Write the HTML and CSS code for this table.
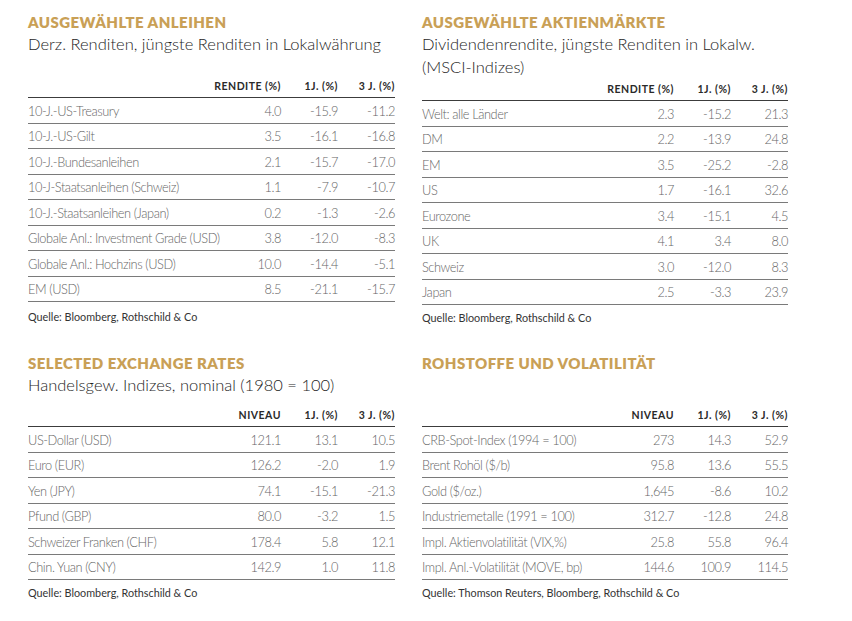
FILE: index.html
```html
<!DOCTYPE html>
<html lang="de">
<head>
<meta charset="utf-8">
<title>Märkte</title>
<link rel="stylesheet" href="styles.css">
</head>
<body>
<main class="page">
  <section class="panel panel--bonds">
    <h2 class="title">Ausgewählte Anleihen</h2>
    <p class="sub">Derz. Renditen, jüngste Renditen in Lokalwährung</p>
    <table class="data">
      <thead><tr><th class="lbl"></th><th class="c1">Rendite (%)</th><th class="c2">1J. (%)</th><th class="c3">3 J. (%)</th></tr></thead>
      <tbody>
        <tr><td>10-J.-US-Treasury</td><td>4.0</td><td>-15.9</td><td>-11.2</td></tr>
        <tr><td>10-J.-US-Gilt</td><td>3.5</td><td>-16.1</td><td>-16.8</td></tr>
        <tr><td>10-J.-Bundesanleihen</td><td>2.1</td><td>-15.7</td><td>-17.0</td></tr>
        <tr><td>10-J-Staatsanleihen (Schweiz)</td><td>1.1</td><td>-7.9</td><td>-10.7</td></tr>
        <tr><td>10-J.-Staatsanleihen (Japan)</td><td>0.2</td><td>-1.3</td><td>-2.6</td></tr>
        <tr><td>Globale Anl.: Investment Grade (USD)</td><td>3.8</td><td>-12.0</td><td>-8.3</td></tr>
        <tr><td>Globale Anl.: Hochzins (USD)</td><td>10.0</td><td>-14.4</td><td>-5.1</td></tr>
        <tr><td>EM (USD)</td><td>8.5</td><td>-21.1</td><td>-15.7</td></tr>
      </tbody>
    </table>
    <p class="source">Quelle: Bloomberg, Rothschild &amp; Co</p>
  </section>

  <section class="panel panel--equity">
    <h2 class="title">Ausgewählte Aktienmärkte</h2>
    <p class="sub">Dividendenrendite, jüngste Renditen in Lokalw.<br>(MSCI-Indizes)</p>
    <table class="data">
      <thead><tr><th class="lbl"></th><th class="c1">Rendite (%)</th><th class="c2">1J. (%)</th><th class="c3">3 J. (%)</th></tr></thead>
      <tbody>
        <tr><td>Welt: alle Länder</td><td>2.3</td><td>-15.2</td><td>21.3</td></tr>
        <tr><td>DM</td><td>2.2</td><td>-13.9</td><td>24.8</td></tr>
        <tr><td>EM</td><td>3.5</td><td>-25.2</td><td>-2.8</td></tr>
        <tr><td>US</td><td>1.7</td><td>-16.1</td><td>32.6</td></tr>
        <tr><td>Eurozone</td><td>3.4</td><td>-15.1</td><td>4.5</td></tr>
        <tr><td>UK</td><td>4.1</td><td>3.4</td><td>8.0</td></tr>
        <tr><td>Schweiz</td><td>3.0</td><td>-12.0</td><td>8.3</td></tr>
        <tr><td>Japan</td><td>2.5</td><td>-3.3</td><td>23.9</td></tr>
      </tbody>
    </table>
    <p class="source">Quelle: Bloomberg, Rothschild &amp; Co</p>
  </section>

  <section class="panel panel--fx">
    <h2 class="title">Selected Exchange Rates</h2>
    <p class="sub">Handelsgew. Indizes, nominal (1980 = 100)</p>
    <table class="data">
      <thead><tr><th class="lbl"></th><th class="c1">Niveau</th><th class="c2">1J. (%)</th><th class="c3">3 J. (%)</th></tr></thead>
      <tbody>
        <tr><td>US-Dollar (USD)</td><td>121.1</td><td>13.1</td><td>10.5</td></tr>
        <tr><td>Euro (EUR)</td><td>126.2</td><td>-2.0</td><td>1.9</td></tr>
        <tr><td>Yen (JPY)</td><td>74.1</td><td>-15.1</td><td>-21.3</td></tr>
        <tr><td>Pfund (GBP)</td><td>80.0</td><td>-3.2</td><td>1.5</td></tr>
        <tr><td>Schweizer Franken (CHF)</td><td>178.4</td><td>5.8</td><td>12.1</td></tr>
        <tr><td>Chin. Yuan (CNY)</td><td>142.9</td><td>1.0</td><td>11.8</td></tr>
      </tbody>
    </table>
    <p class="source">Quelle: Bloomberg, Rothschild &amp; Co</p>
  </section>

  <section class="panel panel--commod">
    <h2 class="title">Rohstoffe und Volatilität</h2>
    <p class="sub sub--empty">&nbsp;</p>
    <table class="data">
      <thead><tr><th class="lbl"></th><th class="c1">Niveau</th><th class="c2">1J. (%)</th><th class="c3">3 J. (%)</th></tr></thead>
      <tbody>
        <tr><td>CRB-Spot-Index (1994 = 100)</td><td>273</td><td>14.3</td><td>52.9</td></tr>
        <tr><td>Brent Rohöl ($/b)</td><td>95.8</td><td>13.6</td><td>55.5</td></tr>
        <tr><td>Gold ($/oz.)</td><td>1,645</td><td>-8.6</td><td>10.2</td></tr>
        <tr><td>Industriemetalle (1991 = 100)</td><td>312.7</td><td>-12.8</td><td>24.8</td></tr>
        <tr><td>Impl. Aktienvolatilität (VIX,%)</td><td>25.8</td><td>55.8</td><td>96.4</td></tr>
        <tr><td>Impl. Anl.-Volatilität (MOVE, bp)</td><td>144.6</td><td>100.9</td><td>114.5</td></tr>
      </tbody>
    </table>
    <p class="source">Quelle: Thomson Reuters, Bloomberg, Rothschild &amp; Co</p>
  </section>
</main>
</body>
</html>
```

FILE: styles.css
```css
* { box-sizing: border-box; }

html, body {
  margin: 0;
  padding: 0;
  background: #ffffff;
}

body {
  font-family: Lato, "Open Sans", "Liberation Sans", sans-serif;
  color: #222;
}

.page {
  display: grid;
  grid-template-columns: 367px 366px;
  column-gap: 27px;
  row-gap: 30px;
  padding: 13px 0 0 28px;
}

.panel {
  display: flex;
  flex-direction: column;
}

.title {
  margin: 0;
  font-size: 15px;
  line-height: 19px;
  font-weight: 800;
  letter-spacing: 0.45px;
  text-transform: uppercase;
  color: #c9a056;
}

.sub {
  margin: 1px 0 0;
  font-size: 16.5px;
  line-height: 23px;
  font-weight: 300;
  color: #1e1e1e;
}

.panel--bonds .sub { margin-bottom: 24px; }
.panel--equity .sub { margin-bottom: 4px; }
.panel--fx .sub { margin-bottom: 12px; }
.panel--commod .sub { margin-bottom: 12px; }

.data {
  width: 100%;
  border-collapse: collapse;
  table-layout: fixed;
}

.data th {
  font-size: 10.5px;
  font-weight: 700;
  letter-spacing: 0.5px;
  text-transform: uppercase;
  color: #2a2a2a;
  text-align: right;
  padding: 0 0 5px;
  border-bottom: 1.5px solid #3c3c3c;
  white-space: nowrap;
}

.data th.lbl { width: auto; }
.data th.c1 { width: 80px; }
.data th.c2 { width: 57px; }
.data th.c3 { width: 57px; }

.data td {
  height: 25.5px;
  padding: 1px 0 0;
  font-size: 12.8px;
  letter-spacing: -0.42px;
  font-weight: 300;
  color: #666;
  text-align: right;
  border-bottom: 1px solid #7a7a7a;
  white-space: nowrap;
}

.data td:first-child {
  text-align: left;
}

.source {
  margin: 8px 0 0;
  font-size: 10.8px;
  font-weight: 400;
  color: #333;
}

.panel--equity .source,
.panel--fx .source,
.panel--commod .source {
  margin-top: 6px;
}
```
